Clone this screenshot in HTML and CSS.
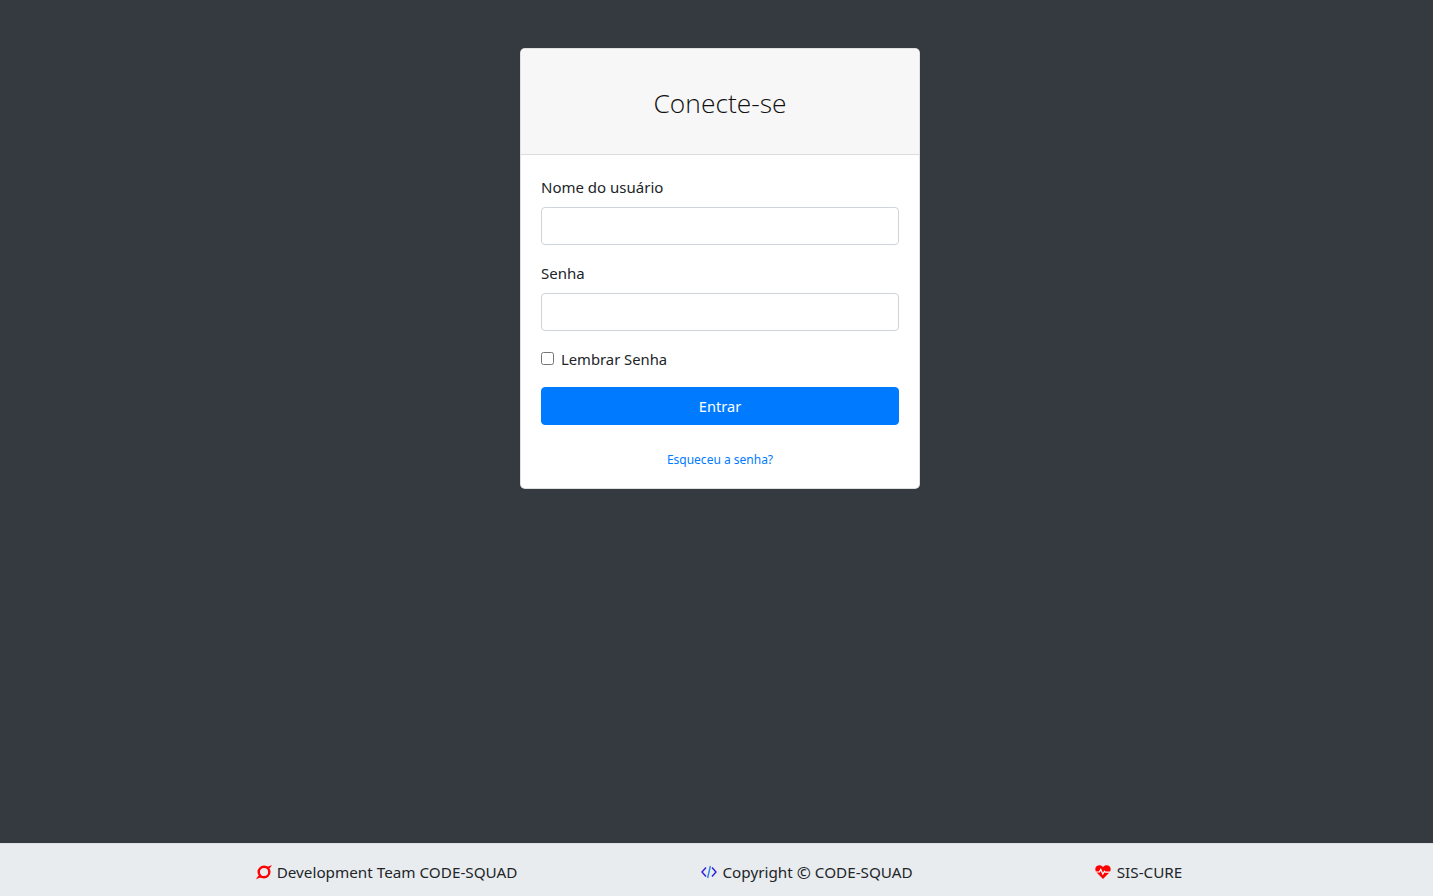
FILE: index.html
```html
<!DOCTYPE html>
<html lang="pt-BR">
<head>
<meta charset="utf-8">
<title>Conecte-se</title>
<link rel="stylesheet" href="styles.css">
</head>
<body>
<main class="page">
  <div class="card">
    <div class="card-header"><h3 class="title">Conecte-se</h3></div>
    <form class="card-body">
      <div class="group">
        <label class="label" for="user">Nome do usuário</label>
        <input class="input" id="user" type="text">
      </div>
      <div class="group">
        <label class="label" for="pass">Senha</label>
        <input class="input" id="pass" type="password">
      </div>
      <div class="check">
        <input class="checkbox" id="remember" type="checkbox">
        <label class="check-label" for="remember">Lembrar Senha</label>
      </div>
      <button class="btn" type="button">Entrar</button>
      <div class="forgot"><a class="link" href="#">Esqueceu a senha?</a></div>
    </form>
  </div>
</main>
<footer class="footer">
  <span class="foot-item foot-first">
    <svg class="icon" viewBox="0 0 16 16"><circle cx="8" cy="8" r="5.300" fill="none" stroke="#f00" stroke-width="2.400"/><path fill="#f00" d="M15.800.7C14.400 2.100 12.400 2.600 10 2.400l2.600 3C13.600 4.300 15.200 2.600 15.800.700ZM.2 15.400C1.800 14.100 3.600 13.500 6 13.700L3.400 10.700C2.300 11.900.8 13.500.2 15.400Z"/></svg>
    <span>Development Team CODE-SQUAD</span>
  </span>
  <span class="foot-item">
    <svg class="icon" viewBox="0 0 16 16"><path fill="none" stroke="#2a1fe0" stroke-width="1.400" d="M5 3.500 1 8l4 4.500M11 3.500 15 8l-4 4.500"/><path fill="none" stroke="#2f7fe8" stroke-width="1.400" d="M9.400 2 6.600 14"/></svg>
    <span>Copyright <span class="copy">©</span> CODE-SQUAD</span>
  </span>
  <span class="foot-item foot-last">
    <svg class="icon" viewBox="0 0 16 16"><path fill="#f00" d="M8 15 1.600 8.600C-.2 6.600-.1 3.600 1.800 2 3.600.6 6.300.9 8 2.900 9.700.9 12.400.6 14.200 2c1.900 1.600 2 4.600.2 6.600Z"/><path fill="none" stroke="#fff" stroke-width="1.200" d="M1 8h3.400l1.400-2.600 2 4.800 1.600-3 .8.9H15"/></svg>
    <span>SIS-CURE</span>
  </span>
</footer>
</body>
</html>
```

FILE: styles.css
```css
* { box-sizing: border-box; }
html, body { height: 100%; }
body {
  margin: 0;
  display: flex;
  flex-direction: column;
  background: #343a40;
  color: #212529;
  font-family: "Noto Sans", "Open Sans", sans-serif;
  font-size: 15px;
  line-height: 24px;
}
.page {
  flex: 1;
  display: flex;
  justify-content: center;
  align-items: flex-start;
  padding: 48px 0 0 7px;
}
.card {
  width: 400px;
  background: #fff;
  border: 1px solid rgba(0,0,0,.125);
  border-radius: 5px;
}
.card-header {
  height: 106px;
  padding-top: 37px;
  background: #f7f7f7;
  border-bottom: 1px solid #dcdcdc;
  border-radius: 4px 4px 0 0;
}
.title {
  margin: 0;
  text-align: center;
  font-family: "Open Sans", sans-serif;
  font-size: 26.400px;
  font-weight: 300;
  line-height: 34px;
  color: #111;
}
.card-body { padding: 20px 20px 18px; }
.group { margin-bottom: 16px; }
.label { display: block; margin-bottom: 8px; }
.input {
  display: block;
  width: 100%;
  height: 38px;
  padding: 6px 12px;
  border: 1px solid #ced4da;
  border-radius: 4px;
  background: #fff;
}
.check { display: flex; align-items: center; height: 24px; margin-bottom: 16px; }
.checkbox { width: 13px; height: 13px; margin: 0 7px 2px 0; }
.check-label { display: block; font-size: 14.800px; }
.btn {
  display: block;
  width: 100%;
  height: 38px;
  border: 1px solid #007bff;
  border-radius: 4px;
  background: #007bff;
  color: #fff;
  font: inherit;
  font-size: 14.600px;
}
.forgot { margin-top: 25px; text-align: center; font-size: 12px; line-height: 20px; }
.link { color: #007bff; text-decoration: none; }
.footer {
  height: 53px;
  flex: none;
  display: flex;
  align-items: center;
  justify-content: center;
  gap: 182px;
  padding: 4px 0 0 5px;
  background: #e9ecef;
  border-top: 1px solid #dee2e6;
  white-space: nowrap;
  font-size: 15.250px;
}
.foot-item { display: flex; align-items: center; gap: 5px; }
.foot-first { margin-right: 2px; }
.foot-last { gap: 6px; }
.copy { font-size: 17px; line-height: 20px; vertical-align: -1px; }
.icon { width: 16px; height: 16px; flex: none; }
```
